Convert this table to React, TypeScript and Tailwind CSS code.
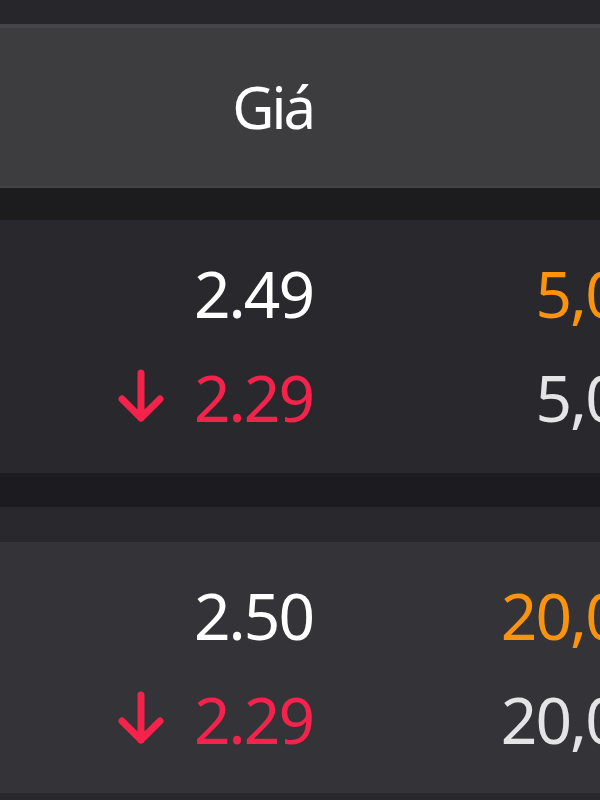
import React from "react"

type Row = {
  price: string
  qty: string
  down?: boolean
}

type Offer = {
  rows: Row[]
  bg: string
}

const offers: Offer[] = [
  {
    bg: "bg-[#29282d]",
    rows: [
      { price: "2.49", qty: "5,000" },
      { price: "2.29", qty: "5,000", down: true },
    ],
  },
  {
    bg: "bg-[#333338]",
    rows: [
      { price: "2.50", qty: "20,000" },
      { price: "2.29", qty: "20,000", down: true },
    ],
  },
]

function DownArrow() {
  return (
    <svg width="48" height="56" viewBox="0 0 48 56" fill="none" className="shrink-0">
      <path
        d="M24 5v45M5 31l19 19 19-19"
        stroke="#f5234c"
        strokeWidth="7"
        strokeLinecap="round"
        strokeLinejoin="round"
      />
    </svg>
  )
}

function PriceRow({ row, first }: { row: Row; first: boolean }) {
  return (
    <div className="flex h-[104px] items-center">
      <div className="flex w-[313px] items-center justify-end">
        {row.down && (
          <div className="mr-[29px] mt-[-4px]">
            <DownArrow />
          </div>
        )}
        <span className={row.down ? "text-[#f5234c]" : "text-white"}>{row.price}</span>
      </div>
      <div className="w-[376px] text-right">
        <span className={first ? "text-[#fa940e]" : "text-[#e4e4e6]"}>{row.qty}</span>
      </div>
    </div>
  )
}

export default function App() {
  return (
    <div
      className="w-[600px] h-[800px] overflow-hidden bg-[#1c1c1f]"
      style={{ fontFamily: '"Noto Sans", "Open Sans", sans-serif' }}
    >
      <div className="w-[720px]">
        <div className="h-[24px] bg-[#27262b]" />
        <div className="h-[4px] bg-[#46454b]" />
        {/* header */}
        <div className="flex h-[160px] items-center border-b-2 border-[#434247] bg-[#3d3d40]">
          <div className="w-[313px] text-right text-[58px] leading-none tracking-[-3px] text-white">Giá</div>
        </div>

        <div className="h-[32px] bg-[#1c1c1f]" />

        <div className={`${offers[0].bg} h-[253px] pt-[22px] text-[64px] leading-none tracking-[-2px]`}>
          {offers[0].rows.map((r, i) => (
            <PriceRow key={i} row={r} first={i === 0} />
          ))}
        </div>

        <div className="h-[34px] bg-[#1c1c20]" />
        <div className="h-[35px] bg-[#28282d]" />

        <div className={`${offers[1].bg} h-[251px] pt-[22px] text-[64px] leading-none tracking-[-2px]`}>
          {offers[1].rows.map((r, i) => (
            <PriceRow key={i} row={r} first={i === 0} />
          ))}
        </div>
        <div className="h-[20px] bg-[#29292d]" />
      </div>
    </div>
  )
}
